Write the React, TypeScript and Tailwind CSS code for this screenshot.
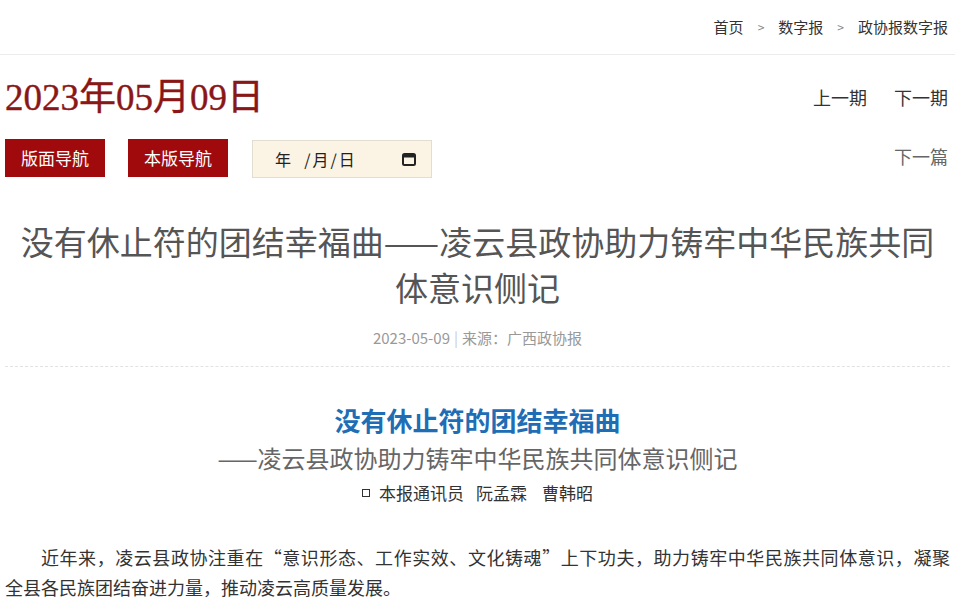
import React from "react";

const SANS = "font-['Microsoft_YaHei','Noto_Sans_CJK_SC',sans-serif]";

function CalendarIcon() {
  return (
    <svg width="16" height="16" viewBox="0 0 16 16" fill="none">
      <rect x="2" y="3" width="12" height="11" rx="1.5" stroke="#222" strokeWidth="2" />
      <rect x="2" y="3" width="12" height="3.5" fill="#222" />
    </svg>
  );
}

export default function App() {
  return (
    <div className={`w-[965px] min-h-[606px] bg-white ${SANS} overflow-hidden`}>
      {/* breadcrumb */}
      <div className="h-[55px] w-[955px] flex items-center justify-end pr-[7px] border-b border-[#ececec] text-[15px] text-[#333]">
        <span>首页</span>
        <span className="mx-[14px] text-[12px] text-[#888]">&gt;</span>
        <span>数字报</span>
        <span className="mx-[14px] text-[12px] text-[#888]">&gt;</span>
        <span>政协报数字报</span>
      </div>

      <div className="w-[945px] ml-[5px]">
        {/* date row */}
        <div className="mt-[21px] flex items-center justify-between pr-[2px]">
          <div className="h-[44px] leading-[44px] text-[37px] text-[#8a1717] font-['Liberation_Serif','Noto_Sans_CJK_SC',serif] [-webkit-text-stroke:0.4px_#8a1717]">
            2023年05月09日
          </div>
          <div className="flex gap-[27px] text-[18px] text-[#333] -mt-[2px]">
            <span>上一期</span>
            <span>下一期</span>
          </div>
        </div>

        {/* nav row */}
        <div className="mt-[18px] flex items-center justify-between pr-[2px]">
          <div className="flex items-center">
            <div className="w-[100px] h-[38px] flex items-center justify-center bg-[#a10a0d] text-white text-[17px]">
              版面导航
            </div>
            <div className="ml-[23px] w-[100px] h-[38px] flex items-center justify-center bg-[#a10a0d] text-white text-[17px]">
              本版导航
            </div>
            <div className="ml-[24px] mt-[2px] w-[180px] h-[38px] flex items-center justify-between pl-[22px] pr-[14px] bg-[#fbf3e4] border border-[#e2ddd2] text-[16px] text-[#222]">
              <span className="tracking-[2px]">年&nbsp;&nbsp;/月/日</span>
              <CalendarIcon />
            </div>
          </div>
          <span className="text-[18px] text-[#666] -mt-[4px]">下一篇</span>
        </div>

        {/* title */}
        <h1 className="mt-[40px] text-center text-[33px] leading-[46px] text-[#555] font-normal">
          没有休止符的团结幸福曲——凌云县政协助力铸牢中华民族共同体意识侧记
        </h1>

        <div className="mt-[18px] h-[20px] flex items-center justify-center text-[15px] text-[#999]">
          <span>2023-05-09</span>
          <span className="mx-[4px] text-[#ccc]">|</span>
          <span>来源：广西政协报</span>
        </div>

        <div className="mt-[18px] border-b border-dashed border-[#e2e2e2]" />

        <div className="mt-[36px] text-center text-[26px] leading-[34px] font-bold text-[#1e6db5]">
          没有休止符的团结幸福曲
        </div>
        <div className="mt-[5px] text-center text-[24px] leading-[32px] text-[#666]">
          ——凌云县政协助力铸牢中华民族共同体意识侧记
        </div>
        <div className="mt-[8px] h-[22px] flex items-center justify-center text-[17px] text-[#333]">
          <span className="inline-block w-[8px] h-[8px] border border-[#333] mr-[9px]" />
          <span>本报通讯员</span>
          <span className="ml-[12px]">阮孟霖</span>
          <span className="ml-[15px]">曹韩昭</span>
        </div>

        <p className="mt-[38px] text-[18px] leading-[30px] text-[#333]">
          <span className="block indent-[36px] text-justify [text-align-last:justify]">
            近年来，凌云县政协注重在“意识形态、工作实效、文化铸魂”上下功夫，助力铸牢中华民族共同体意识，凝聚
          </span>
          <span className="block">全县各民族团结奋进力量，推动凌云高质量发展。</span>
        </p>
      </div>
    </div>
  );
}
